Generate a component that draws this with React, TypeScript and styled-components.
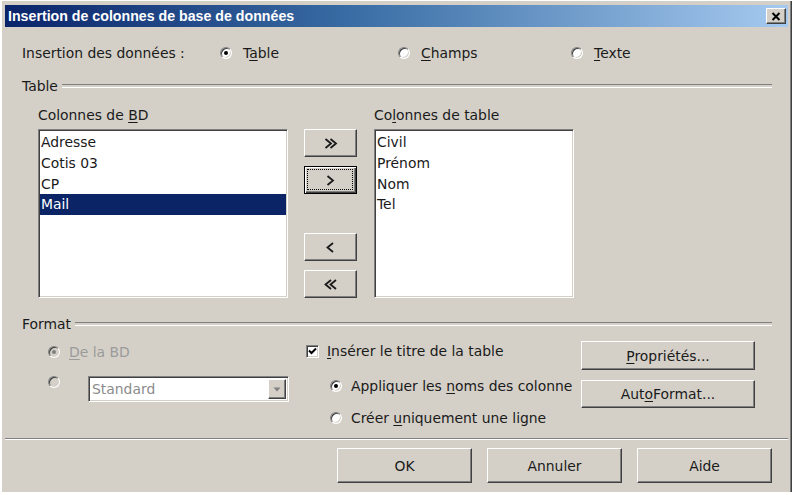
import React from "react";
import styled, { createGlobalStyle, css } from "styled-components";

const GlobalStyle = createGlobalStyle`
  html, body { margin: 0; padding: 0; background: #ffffff; }
  * { box-sizing: border-box; }
`;

const FONT = `"DejaVu Sans", "Noto Sans", sans-serif`;
const SIZE = "13.9px";

const Window = styled.div`
  width: 792px;
  height: 495px;
  background: #d4d0c8;
  padding: 5px 4px 0 3px;
  border-top: 1px solid #ffffff;
  border-left: 2px solid #ffffff;
  box-shadow: inset -1px -1px 0 #404040, inset -2px -2px 0 #808080;
  display: flex;
  flex-direction: column;
  font-family: ${FONT};
  font-size: ${SIZE};
  color: #1a1a1a;
  position: relative;
  overflow: hidden;
  &::after {
    content: "";
    position: absolute;
    left: 0;
    right: 0;
    bottom: 0;
    height: 3px;
    background: #ffffff;
  }
`;

const TitleBar = styled.div`
  height: 22px;
  margin-top: -1px;
  background: linear-gradient(to right, #0a246a 0%, #3a6ea5 45%, #a6caf0 100%);
  display: flex;
  align-items: center;
  padding: 0 2px 0 3px;
`;

const TitleText = styled.span`
  flex: 1;
  color: #ffffff;
  font-family: "Liberation Sans", Arial, sans-serif;
  font-weight: bold;
  font-size: 14.2px;
`;

const CloseButton = styled.div`
  width: 20px;
  height: 16px;
  background: #d4d0c8;
  border: 1px solid;
  border-color: #ffffff #404040 #404040 #ffffff;
  box-shadow: inset -1px -1px 0 #808080;
  display: flex;
  align-items: center;
  justify-content: center;
`;

const Content = styled.div`
  flex: 1;
  display: flex;
  flex-direction: column;
  padding: 16px 0 0 0;
`;

const Indented = styled.div`
  padding: 0 16px 0 17px;
`;

const InsertRow = styled.div`
  display: grid;
  grid-template-columns: 198px 178px 173px auto;
  height: 20px;
  align-items: center;
`;

const Option = styled.label<{ $disabled?: boolean; $gap?: number }>`
  display: flex;
  align-items: center;
  gap: ${(p) => p.$gap ?? 11}px;
  white-space: nowrap;
  color: ${(p) => (p.$disabled ? "#9b9b9b" : "inherit")};
`;

const Radio = styled.span<{ $on?: boolean; $disabled?: boolean }>`
  position: relative;
  display: inline-block;
  flex: none;
  width: 12px;
  height: 12px;
  border-radius: 50%;
  border: 1px solid;
  border-color: #808080 #ffffff #ffffff #808080;
  background: ${(p) => (p.$disabled ? "#d4d0c8" : "#ffffff")};
  box-shadow: inset 1px 1px 0 #404040, inset -1px -1px 0 #d4d0c8;
  &::after {
    content: "";
    display: ${(p) => (p.$on ? "block" : "none")};
    position: absolute;
    left: 3px;
    top: 3px;
    width: 4px;
    height: 4px;
    border-radius: 50%;
    background: ${(p) => (p.$disabled ? "#808080" : "#000")};
  }
`;

const CheckBox = styled.span`
  display: inline-flex;
  flex: none;
  width: 13px;
  height: 13px;
  background: #ffffff;
  border: 1px solid;
  border-color: #808080 #ffffff #ffffff #808080;
  box-shadow: inset 1px 1px 0 #404040, inset -1px -1px 0 #d4d0c8;
  align-items: center;
  justify-content: center;
`;

const U = styled.span`
  text-decoration: underline;
  text-underline-offset: 2px;
`;

const GroupHeader = styled.div<{ $top: number }>`
  margin-top: ${(p) => p.$top}px;
  height: 16px;
  display: flex;
  align-items: center;
  gap: 4px;
  &::after {
    content: "";
    flex: 1;
    height: 2px;
    border-top: 1px solid #808080;
    border-bottom: 1px solid #ffffff;
  }
`;

const ColumnsArea = styled.div`
  margin-top: 13px;
  padding-left: 16px;
  display: grid;
  grid-template-columns: 250px 53px 201px;
  column-gap: 16px;
  grid-template-rows: 16px 169px;
  row-gap: 6px;
  & > :nth-child(2) {
    grid-column: 3;
    margin-left: 1px;
  }
  & > :nth-child(5) {
    margin-left: 1px;
  }
`;

const ColLabel = styled.div`
  display: flex;
  align-items: center;
  white-space: nowrap;
`;

const ListBox = styled.div`
  background: #ffffff;
  border: 1px solid;
  border-color: #808080 #ffffff #ffffff #808080;
  box-shadow: inset 1px 1px 0 #404040, inset -1px -1px 0 #d4d0c8;
  padding: 2px 1px 0 1px;
  overflow: hidden;
`;

const ListItem = styled.div<{ $selected?: boolean }>`
  height: 20.75px;
  line-height: 20.75px;
  padding-left: 1px;
  white-space: nowrap;
  background: ${(p) => (p.$selected ? "#0a2466" : "transparent")};
  color: ${(p) => (p.$selected ? "#ffffff" : "inherit")};
`;

const MoveColumn = styled.div`
  display: flex;
  flex-direction: column;
  gap: 9px;
  & > :nth-child(3) {
    margin-top: 30px;
  }
`;

const bevel = css`
  background: #d4d0c8;
  border: 1px solid;
  border-color: #ffffff #404040 #404040 #ffffff;
  box-shadow: inset -1px -1px 0 #808080;
`;

const Button = styled.div<{ $w?: number; $h: number; $focused?: boolean }>`
  ${bevel}
  position: relative;
  width: ${(p) => (p.$w ? `${p.$w}px` : "100%")};
  height: ${(p) => p.$h}px;
  display: flex;
  align-items: center;
  justify-content: center;
  font-family: ${FONT};
  font-size: ${SIZE};
  color: #1a1a1a;
  white-space: nowrap;
  ${(p) =>
    p.$focused &&
    css`
      border-color: #000;
      box-shadow: inset 1px 1px 0 #ffffff, inset -1px -1px 0 #404040, inset -2px -2px 0 #808080;
      &::after {
        content: "";
        position: absolute;
        inset: 2px 3px 3px 2px;
        border: 1px dotted #000;
      }
    `}
`;

const FormatArea = styled.div`
  height: 106px;
  display: grid;
  grid-template-columns: 258px 275px 174px;
  padding-left: 43px;
`;

const LeftCol = styled.div`
  display: flex;
  flex-direction: column;
  padding-top: 10px;
`;

const OptionRow = styled.div<{ $h: number; $mt?: number; $indent?: number }>`
  height: ${(p) => p.$h}px;
  margin-top: ${(p) => p.$mt ?? 0}px;
  padding-left: ${(p) => p.$indent ?? 0}px;
  display: flex;
  align-items: center;
`;

const ComboRow = styled.div`
  margin-top: 14px;
  display: flex;
  align-items: flex-start;
  gap: 28px;
`;

const Combo = styled.div`
  width: 201px;
  height: 26px;
  background: #ffffff;
  border: 1px solid;
  border-color: #808080 #ffffff #ffffff #808080;
  box-shadow: inset 1px 1px 0 #404040, inset -1px -1px 0 #d4d0c8;
  display: flex;
  align-items: center;
  padding: 2px 2px 2px 3px;
  color: #8c8c8c;
`;

const ComboText = styled.span`
  flex: 1;
`;

const ComboArrow = styled.div`
  ${bevel}
  width: 18px;
  height: 100%;
  display: flex;
  align-items: center;
  justify-content: center;
`;

const MidCol = styled.div`
  display: flex;
  flex-direction: column;
  padding-top: 9px;
`;

const RightCol = styled.div`
  display: flex;
  flex-direction: column;
  gap: 10px;
  padding-top: 9px;
`;

const Separator = styled.div`
  height: 2px;
  border-top: 1px solid #808080;
  border-bottom: 1px solid #ffffff;
`;

const Footer = styled.div`
  margin-top: 8px;
  padding-right: 16px;
  display: flex;
  justify-content: flex-end;
  gap: 15px;
`;

const CheckMark = () => (
  <svg width="9" height="9" viewBox="0 0 9 9">
    <path d="M1 3.5 L3.5 6 L8 1.5" fill="none" stroke="#000" strokeWidth="2" />
  </svg>
);

const CloseX = () => (
  <svg width="10" height="9" viewBox="0 0 10 9">
    <path d="M1.5 1 L8.5 8 M8.5 1 L1.5 8" stroke="#000" strokeWidth="2" fill="none" />
  </svg>
);

const DownTriangle = () => (
  <svg width="8" height="5" viewBox="0 0 8 5">
    <path d="M0.5 0.5 H7.5 L4 4.5 Z" fill="#808080" />
  </svg>
);

const Chevrons = ({ count, dir }: { count: 1 | 2; dir: "right" | "left" }) => {
  const w = count === 2 ? 14 : 9;
  const one = (x: number) =>
    dir === "right" ? `M${x} 1 L${x + 5.5} 5.5 L${x} 10` : `M${x + 5.5} 1 L${x} 5.5 L${x + 5.5} 10`;
  const d = count === 2 ? `${one(1.5)} ${one(6.5)}` : one(1.5);
  return (
    <svg width={w} height="11" viewBox={`0 0 ${w} 11`}>
      <path d={d} fill="none" stroke="#1a1a1a" strokeWidth="1.8" />
    </svg>
  );
};

const dbColumns = ["Adresse", "Cotis 03", "CP", "Mail"];
const tableColumns = ["Civil", "Prénom", "Nom", "Tel"];

export default function App() {
  return (
    <>
      <GlobalStyle />
      <Window>
        <TitleBar>
          <TitleText>Insertion de colonnes de base de données</TitleText>
          <CloseButton>
            <CloseX />
          </CloseButton>
        </TitleBar>
        <Content>
          <Indented>
            <InsertRow>
              <span>Insertion des données :</span>
              <Option>
                <Radio $on />
                <span>
                  T<U>a</U>ble
                </span>
              </Option>
              <Option>
                <Radio />
                <span>
                  <U>C</U>hamps
                </span>
              </Option>
              <Option>
                <Radio />
                <span>
                  <U>T</U>exte
                </span>
              </Option>
            </InsertRow>
            <GroupHeader $top={15}>Table</GroupHeader>
            <ColumnsArea>
              <ColLabel>
                Colonnes de&nbsp;<U>B</U>D
              </ColLabel>
              <ColLabel>
                Co<U>l</U>onnes de table
              </ColLabel>
              <ListBox>
                {dbColumns.map((c) => (
                  <ListItem key={c} $selected={c === "Mail"}>
                    {c}
                  </ListItem>
                ))}
              </ListBox>
              <MoveColumn>
                <Button $h={28}>
                  <Chevrons count={2} dir="right" />
                </Button>
                <Button $h={28} $focused>
                  <Chevrons count={1} dir="right" />
                </Button>
                <Button $h={28}>
                  <Chevrons count={1} dir="left" />
                </Button>
                <Button $h={28}>
                  <Chevrons count={2} dir="left" />
                </Button>
              </MoveColumn>
              <ListBox>
                {tableColumns.map((c) => (
                  <ListItem key={c}>{c}</ListItem>
                ))}
              </ListBox>
            </ColumnsArea>
            <GroupHeader $top={18}>Format</GroupHeader>
          </Indented>
          <FormatArea>
            <LeftCol>
              <OptionRow $h={20}>
                <Option $disabled $gap={9}>
                  <Radio $on $disabled />
                  <span>
                    <U>D</U>e la BD
                  </span>
                </Option>
              </OptionRow>
              <ComboRow>
                <Radio $disabled />
                <Combo>
                  <ComboText>Standard</ComboText>
                  <ComboArrow>
                    <DownTriangle />
                  </ComboArrow>
                </Combo>
              </ComboRow>
            </LeftCol>
            <MidCol>
              <OptionRow $h={20}>
                <Option $gap={8}>
                  <CheckBox>
                    <CheckMark />
                  </CheckBox>
                  <span>
                    <U>I</U>nsérer le titre de la table
                  </span>
                </Option>
              </OptionRow>
              <OptionRow $h={20} $mt={15} $indent={24}>
                <Option $gap={9}>
                  <Radio $on />
                  <span>
                    Appliquer les <U>n</U>oms des colonne
                  </span>
                </Option>
              </OptionRow>
              <OptionRow $h={20} $mt={12} $indent={24}>
                <Option $gap={9}>
                  <Radio />
                  <span>
                    Créer <U>u</U>niquement une ligne
                  </span>
                </Option>
              </OptionRow>
            </MidCol>
            <RightCol>
              <Button $w={174} $h={29}>
                <span>
                  <U>P</U>ropriétés...
                </span>
              </Button>
              <Button $w={174} $h={28}>
                <span>
                  Aut<U>o</U>Format...
                </span>
              </Button>
            </RightCol>
          </FormatArea>
          <Separator />
          <Footer>
            <Button $w={135} $h={35}>OK</Button>
            <Button $w={135} $h={35}>Annuler</Button>
            <Button $w={135} $h={35}>Aide</Button>
          </Footer>
        </Content>
      </Window>
    </>
  );
}
